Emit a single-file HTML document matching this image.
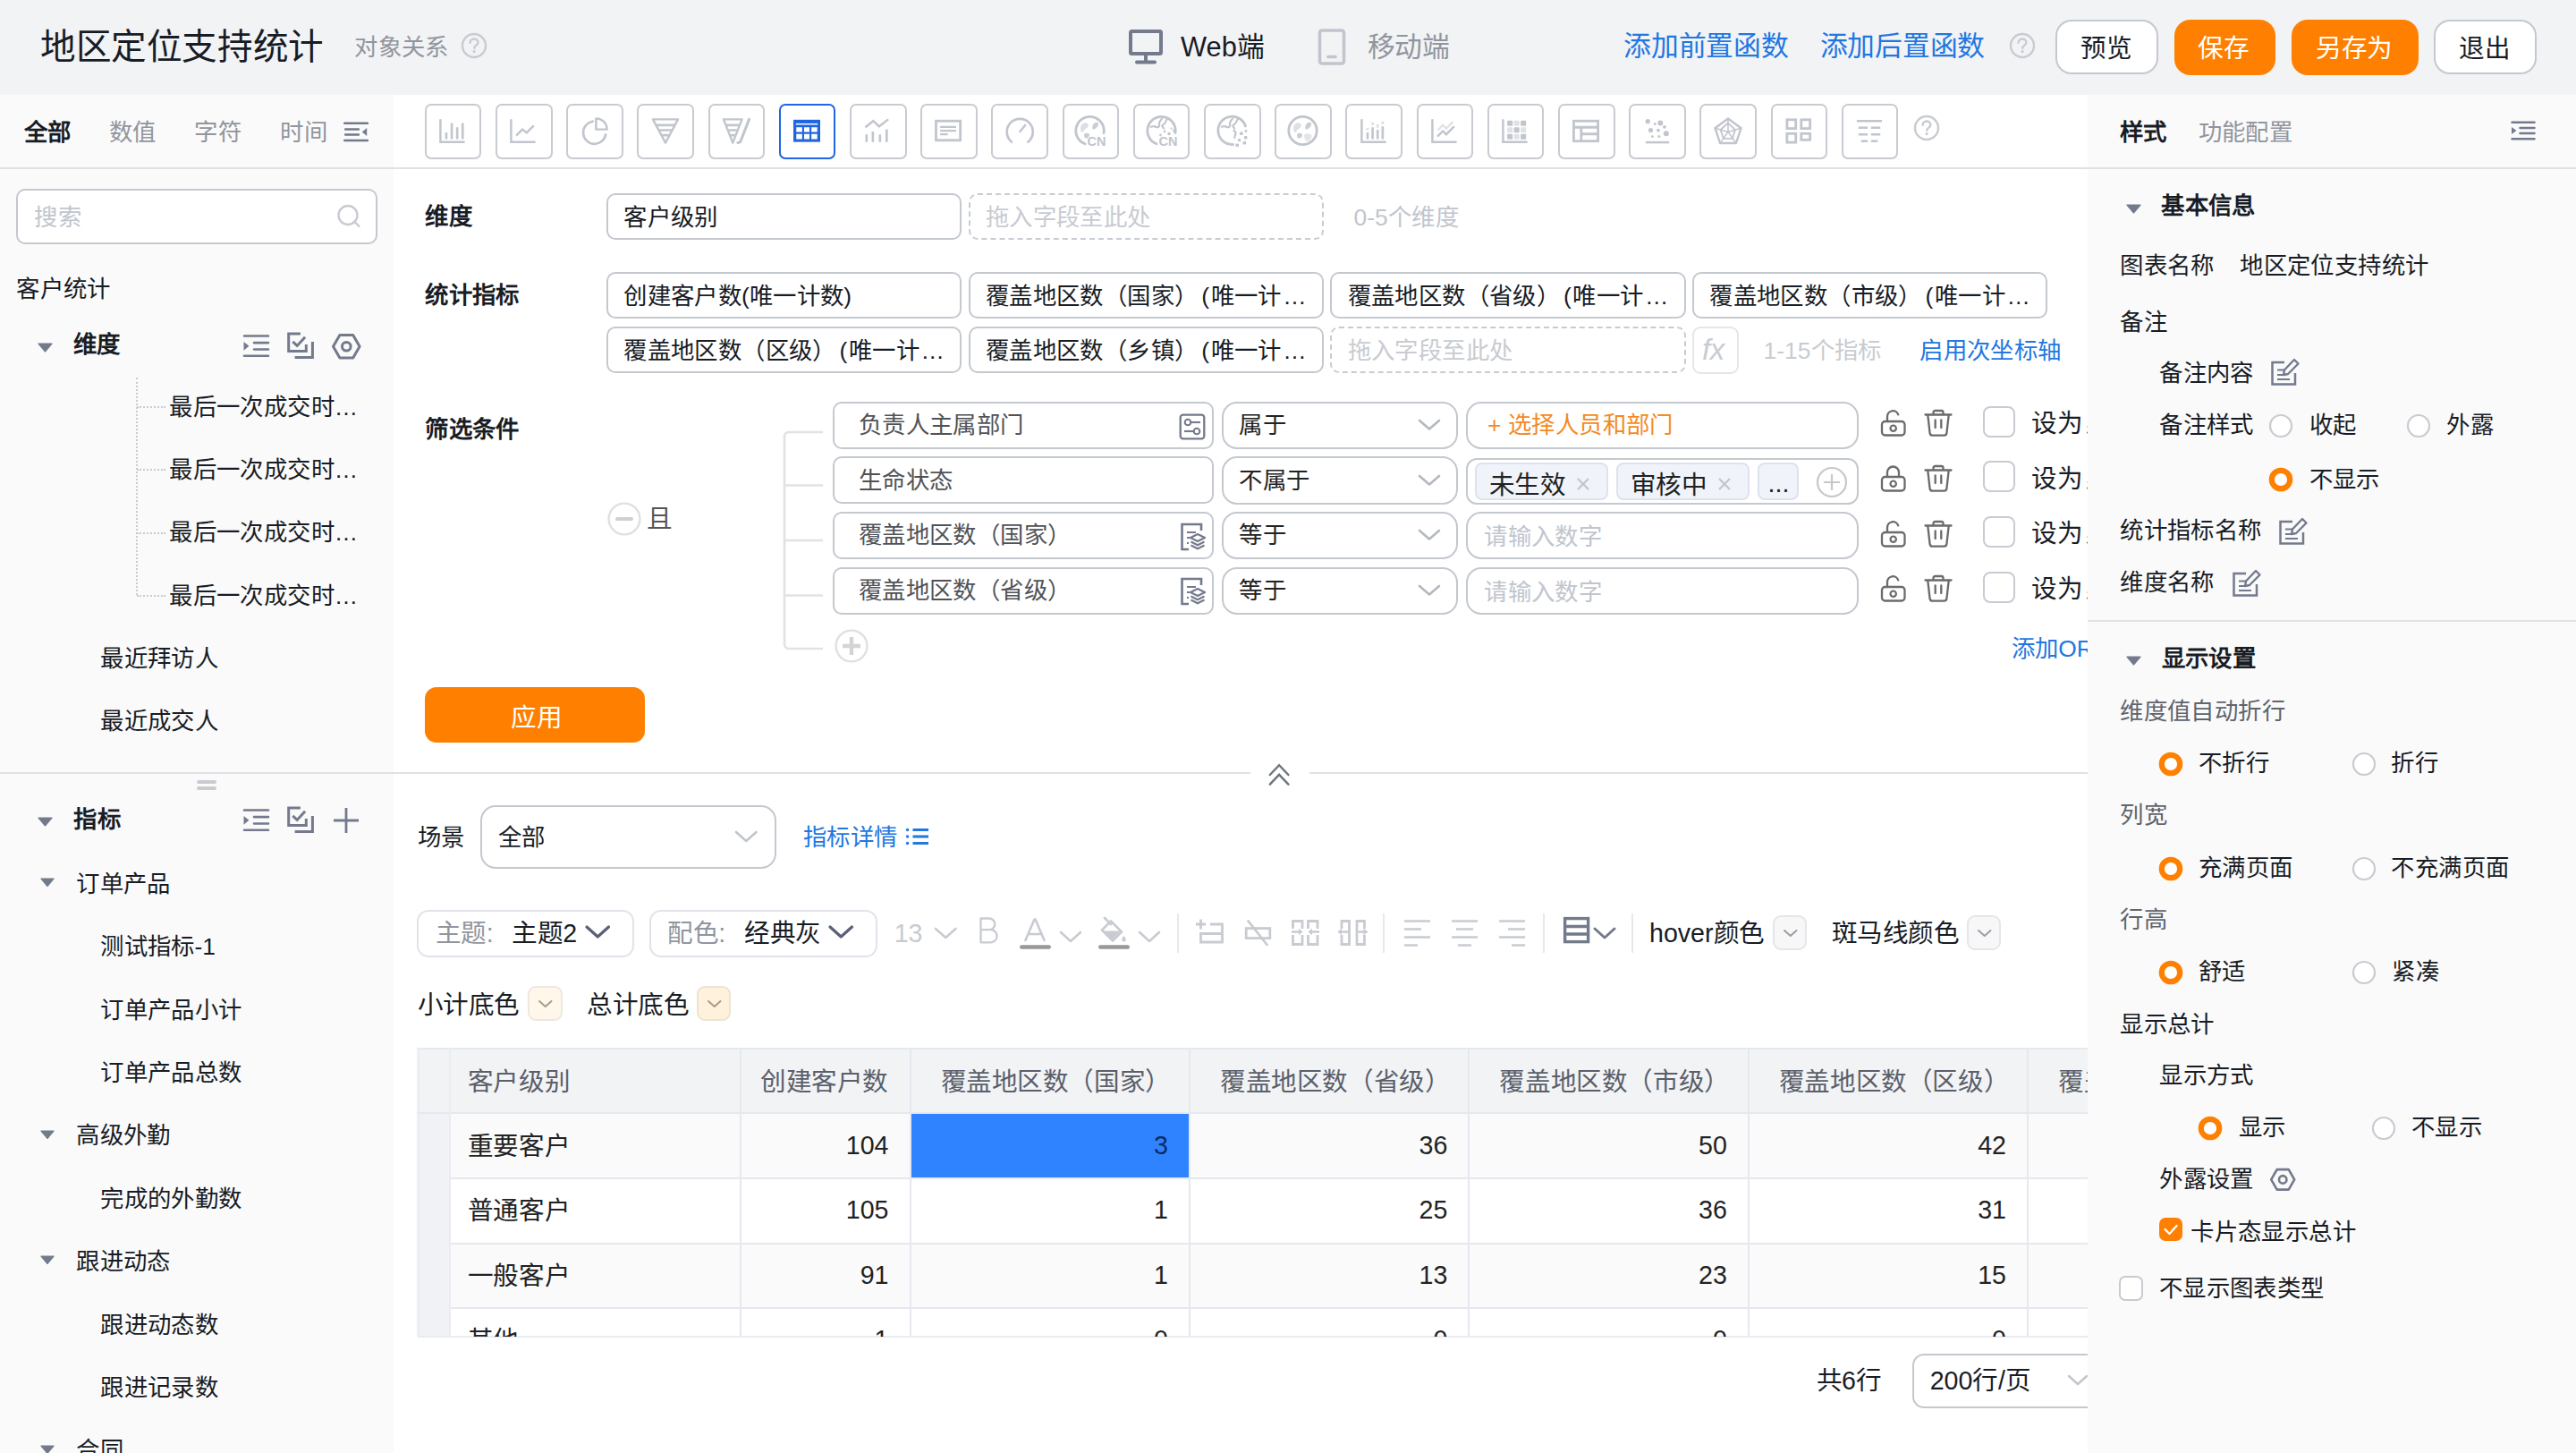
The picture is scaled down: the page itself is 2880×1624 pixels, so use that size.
<!DOCTYPE html>
<html lang="zh-CN"><head><meta charset="utf-8"><title>地区定位支持统计</title>
<style>
html,body{margin:0;padding:0;overflow:hidden;}
body{width:2880px;height:1624px;overflow:hidden;background:#fff;position:relative;font-family:"Liberation Sans",sans-serif;}
.b{position:absolute;box-sizing:content-box;display:block;}
.t{position:absolute;white-space:nowrap;line-height:44px;height:44px;font-family:"Liberation Sans",sans-serif;}
.t i{display:inline-block;width:1em;text-align:center;font-style:normal;}
svg{overflow:visible;}
#root{position:absolute;left:0;top:0;width:2880px;height:1624px;overflow:hidden;background:#fff;}
</style></head><body><div id="root">
<div class="b" style="left:0.0px;top:0.0px;width:2880.0px;height:105.6px;background:#f2f3f5;"></div>
<div class="t" style="left:45.0px;top:30.3px;font-size:39.6px;color:#181c25;"><i>地</i><i>区</i><i>定</i><i>位</i><i>支</i><i>持</i><i>统</i><i>计</i></div>
<div class="t" style="left:396.0px;top:31.3px;font-size:26.4px;color:#91959e;"><i>对</i><i>象</i><i>关</i><i>系</i></div>
<svg class="b" style="left:514.0px;top:35.0px;" width="32" height="32" viewBox="0 0 32 32" fill="none"><circle cx="16" cy="16" r="13" stroke="#c8cbd1" stroke-width="2.4"/><path d="M11.6 12.8c0-2.6 2-4.3 4.4-4.3s4.4 1.6 4.4 4c0 3-4.2 3.2-4.2 6.3" stroke="#c8cbd1" stroke-width="2.4" stroke-linecap="round"/><circle cx="16.1" cy="22.6" r="1.6" fill="#c8cbd1"/></svg>
<svg class="b" style="left:1260.0px;top:31.0px;" width="42" height="42" viewBox="0 0 42 42" fill="none"><rect x="4" y="4" width="34" height="25" rx="1.5" stroke="#737a8c" stroke-width="4"/><path d="M21 29v9M11 38.5h20" stroke="#737a8c" stroke-width="4" stroke-linecap="round"/></svg>
<div class="t" style="left:1320.0px;top:30.8px;font-size:30.8px;color:#181c25;">Web<i>端</i></div>
<svg class="b" style="left:1472.0px;top:31.0px;" width="34" height="42" viewBox="0 0 34 42" fill="none"><rect x="3.5" y="3" width="27" height="37" rx="2.5" stroke="#c1c5cd" stroke-width="3.6"/><path d="M13 32.5h8" stroke="#c1c5cd" stroke-width="3.6" stroke-linecap="round"/></svg>
<div class="t" style="left:1528.5px;top:30.8px;font-size:30.8px;color:#91959e;"><i>移</i><i>动</i><i>端</i></div>
<div class="t" style="left:1815.0px;top:30.4px;font-size:30.8px;color:#2277e0;"><i>添</i><i>加</i><i>前</i><i>置</i><i>函</i><i>数</i></div>
<div class="t" style="left:2034.5px;top:30.4px;font-size:30.8px;color:#2277e0;"><i>添</i><i>加</i><i>后</i><i>置</i><i>函</i><i>数</i></div>
<svg class="b" style="left:2245.0px;top:35.0px;" width="32" height="32" viewBox="0 0 32 32" fill="none"><circle cx="16" cy="16" r="13" stroke="#c8cbd1" stroke-width="2.4"/><path d="M11.6 12.8c0-2.6 2-4.3 4.4-4.3s4.4 1.6 4.4 4c0 3-4.2 3.2-4.2 6.3" stroke="#c8cbd1" stroke-width="2.4" stroke-linecap="round"/><circle cx="16.1" cy="22.6" r="1.6" fill="#c8cbd1"/></svg>
<div class="b" style="left:2298.3px;top:21.8px;width:110.5px;height:57.5px;background:#fff;border:2.2px solid #c4c8cf;border-radius:18px;"></div>
<div class="t" style="left:2298.0px;top:32.1px;font-size:28.6px;color:#181c25;width:113.5px;text-align:center;"><i>预</i><i>览</i></div>
<div class="b" style="left:2430.5px;top:22.0px;width:113.0px;height:62.0px;background:#ff8000;border-radius:18px;"></div>
<div class="t" style="left:2429.5px;top:32.1px;font-size:28.6px;color:#fff;width:113px;text-align:center;"><i>保</i><i>存</i></div>
<div class="b" style="left:2562.0px;top:22.0px;width:142.0px;height:62.0px;background:#ff8000;border-radius:18px;"></div>
<div class="t" style="left:2561.0px;top:32.1px;font-size:28.6px;color:#fff;width:142px;text-align:center;"><i>另</i><i>存</i><i>为</i></div>
<div class="b" style="left:2721.3px;top:21.8px;width:110.5px;height:57.5px;background:#fff;border:2.2px solid #c4c8cf;border-radius:18px;"></div>
<div class="t" style="left:2721.0px;top:32.1px;font-size:28.6px;color:#181c25;width:113.5px;text-align:center;"><i>退</i><i>出</i></div>
<div class="b" style="left:0.0px;top:105.6px;width:440.0px;height:1520.0px;background:#fafafa;"></div>
<div class="b" style="left:0.0px;top:186.6px;width:2880.0px;height:2.2px;background:#dfe1e5;z-index:5;"></div>
<div class="t" style="left:26.5px;top:126.3px;font-size:26.4px;color:#181c25;font-weight:bold;"><i>全</i><i>部</i></div>
<div class="t" style="left:121.5px;top:126.3px;font-size:26.4px;color:#91959e;"><i>数</i><i>值</i></div>
<div class="t" style="left:217.0px;top:126.3px;font-size:26.4px;color:#91959e;"><i>字</i><i>符</i></div>
<div class="t" style="left:313.0px;top:126.3px;font-size:26.4px;color:#91959e;"><i>时</i><i>间</i></div>
<svg class="b" style="left:384.0px;top:134.0px;" width="28" height="26" viewBox="0 0 28 26" fill="none"><path d="M1.200 3.800h25.700M2.100 10.400h14.800M2.100 16.500h14.800M1.200 23.100h25.700" stroke="#737a8c" stroke-width="2.500" stroke-linecap="round"/><path d="M20.800 13.500l5.400-4.500v9z" fill="#737a8c"/></svg>
<div class="b" style="left:18.3px;top:210.8px;width:399.6px;height:58.6px;background:#fff;border:2.2px solid #c4c8cf;border-radius:10px;"></div>
<div class="t" style="left:38.0px;top:220.8px;font-size:26.4px;color:#c1c5cd;"><i>搜</i><i>索</i></div>
<svg class="b" style="left:374.0px;top:226.0px;" width="32" height="32" viewBox="0 0 32 32" fill="none"><circle cx="15" cy="14.5" r="10.5" stroke="#c8cbd1" stroke-width="2.4"/><path d="M23 22.5l4.5 4.5" stroke="#c8cbd1" stroke-width="2.4" stroke-linecap="round"/></svg>
<div class="t" style="left:18.0px;top:301.3px;font-size:26.4px;color:#181c25;"><i>客</i><i>户</i><i>统</i><i>计</i></div>
<svg class="b" style="left:42.0px;top:382.5px;" width="17" height="10.5" viewBox="0 0 17 10.5" fill="none"><path d="M1 0.5h15a.6.6 0 0 1 .5 1L9.3 9.9a1 1 0 0 1-1.6 0L.5 1.5a.6.6 0 0 1 .5-1z" fill="#737a8c"/></svg>
<div class="t" style="left:81.5px;top:363.3px;font-size:26.4px;color:#181c25;font-weight:bold;"><i>维</i><i>度</i></div>
<svg class="b" style="left:271.5px;top:374.0px;" width="30" height="26" viewBox="0 0 30 26" fill="none"><path d="M1 1.500h27M12 9.100h16M12 16.500h16M1 23.800h27" stroke="#737a8c" stroke-width="2.600" stroke-linecap="round"/><path d="M0.500 8l5.900 4.800-5.900 4.900z" fill="#737a8c"/></svg>
<svg class="b" style="left:320.0px;top:371.0px;" width="32" height="32" viewBox="0 0 32 32" fill="none"><path d="M15.900 1.900H2.700v19.500h19.600v-7.300" stroke="#737a8c" stroke-width="3"/><path d="M7.300 10.800l4.900 4.600 8.900-9.600" stroke="#737a8c" stroke-width="3"/><path d="M29.400 11.100v17.500H9.600" stroke="#737a8c" stroke-width="3"/></svg>
<svg class="b" style="left:370.0px;top:371.5px;" width="34.0" height="31.0" viewBox="0 0 34 31" fill="none"><path d="M9.900 2.400h14.800l7.400 12.800-7.400 12.800H9.900L2.500 15.200z" stroke="#737a8c" stroke-width="3.0" stroke-linejoin="round"/><circle cx="17.300" cy="15.200" r="4.800" stroke="#737a8c" stroke-width="3.0"/></svg>
<div class="b" style="left:152.0px;top:422.0px;width:0.0px;height:243.0px;border-left:2px dotted #c8cbd1;"></div>
<div class="b" style="left:153.0px;top:453.7px;width:32.0px;height:0.0px;border-top:2px dotted #c8cbd1;"></div>
<div class="t" style="left:189.0px;top:432.5px;font-size:26.4px;color:#181c25;"><i>最</i><i>后</i><i>一</i><i>次</i><i>成</i><i>交</i><i>时</i>…</div>
<div class="b" style="left:153.0px;top:524.1px;width:32.0px;height:0.0px;border-top:2px dotted #c8cbd1;"></div>
<div class="t" style="left:189.0px;top:502.9px;font-size:26.4px;color:#181c25;"><i>最</i><i>后</i><i>一</i><i>次</i><i>成</i><i>交</i><i>时</i>…</div>
<div class="b" style="left:153.0px;top:594.5px;width:32.0px;height:0.0px;border-top:2px dotted #c8cbd1;"></div>
<div class="t" style="left:189.0px;top:573.3px;font-size:26.4px;color:#181c25;"><i>最</i><i>后</i><i>一</i><i>次</i><i>成</i><i>交</i><i>时</i>…</div>
<div class="b" style="left:153.0px;top:664.9px;width:32.0px;height:0.0px;border-top:2px dotted #c8cbd1;"></div>
<div class="t" style="left:189.0px;top:643.7px;font-size:26.4px;color:#181c25;"><i>最</i><i>后</i><i>一</i><i>次</i><i>成</i><i>交</i><i>时</i>…</div>
<div class="t" style="left:112.0px;top:713.8px;font-size:26.4px;color:#181c25;"><i>最</i><i>近</i><i>拜</i><i>访</i><i>人</i></div>
<div class="t" style="left:112.0px;top:784.1px;font-size:26.4px;color:#181c25;"><i>最</i><i>近</i><i>成</i><i>交</i><i>人</i></div>
<div class="b" style="left:0.0px;top:862.8px;width:2334.4px;height:2.2px;background:#dfe1e5;"></div>
<div class="b" style="left:220.0px;top:872.0px;width:22.0px;height:4.0px;background:#c8cbd1;border-radius:2px;"></div>
<div class="b" style="left:220.0px;top:878.7px;width:22.0px;height:4.0px;background:#c8cbd1;border-radius:2px;"></div>
<svg class="b" style="left:42.0px;top:912.5px;" width="17" height="10.5" viewBox="0 0 17 10.5" fill="none"><path d="M1 0.5h15a.6.6 0 0 1 .5 1L9.3 9.9a1 1 0 0 1-1.6 0L.5 1.5a.6.6 0 0 1 .5-1z" fill="#737a8c"/></svg>
<div class="t" style="left:82.0px;top:894.3px;font-size:26.4px;color:#181c25;font-weight:bold;"><i>指</i><i>标</i></div>
<svg class="b" style="left:271.5px;top:904.0px;" width="30" height="26" viewBox="0 0 30 26" fill="none"><path d="M1 1.500h27M12 9.100h16M12 16.500h16M1 23.800h27" stroke="#737a8c" stroke-width="2.600" stroke-linecap="round"/><path d="M0.500 8l5.900 4.800-5.900 4.900z" fill="#737a8c"/></svg>
<svg class="b" style="left:320.0px;top:900.5px;" width="32" height="32" viewBox="0 0 32 32" fill="none"><path d="M15.900 1.900H2.700v19.500h19.600v-7.300" stroke="#737a8c" stroke-width="3"/><path d="M7.300 10.800l4.900 4.600 8.900-9.600" stroke="#737a8c" stroke-width="3"/><path d="M29.400 11.100v17.500H9.600" stroke="#737a8c" stroke-width="3"/></svg>
<svg class="b" style="left:372.0px;top:902.0px;" width="30" height="30" viewBox="0 0 30 30" fill="none"><path d="M15 1v28M1 15h28" stroke="#737a8c" stroke-width="2.8"/></svg>
<svg class="b" style="left:44.5px;top:981.0px;" width="16" height="10" viewBox="0 0 16 10" fill="none"><path d="M1 0.5h14a.6.6 0 0 1 .5 1L8.8 9.4a1 1 0 0 1-1.6 0L.5 1.5a.6.6 0 0 1 .5-1z" fill="#737a8c"/></svg>
<div class="t" style="left:85.0px;top:965.8px;font-size:26.4px;color:#181c25;"><i>订</i><i>单</i><i>产</i><i>品</i></div>
<div class="t" style="left:112.0px;top:1036.2px;font-size:26.4px;color:#181c25;"><i>测</i><i>试</i><i>指</i><i>标</i>-1</div>
<div class="t" style="left:112.0px;top:1106.6px;font-size:26.4px;color:#181c25;"><i>订</i><i>单</i><i>产</i><i>品</i><i>小</i><i>计</i></div>
<div class="t" style="left:112.0px;top:1177.0px;font-size:26.4px;color:#181c25;"><i>订</i><i>单</i><i>产</i><i>品</i><i>总</i><i>数</i></div>
<svg class="b" style="left:44.5px;top:1262.6px;" width="16" height="10" viewBox="0 0 16 10" fill="none"><path d="M1 0.5h14a.6.6 0 0 1 .5 1L8.8 9.4a1 1 0 0 1-1.6 0L.5 1.5a.6.6 0 0 1 .5-1z" fill="#737a8c"/></svg>
<div class="t" style="left:85.0px;top:1247.4px;font-size:26.4px;color:#181c25;"><i>高</i><i>级</i><i>外</i><i>勤</i></div>
<div class="t" style="left:112.0px;top:1317.8px;font-size:26.4px;color:#181c25;"><i>完</i><i>成</i><i>的</i><i>外</i><i>勤</i><i>数</i></div>
<svg class="b" style="left:44.5px;top:1403.4px;" width="16" height="10" viewBox="0 0 16 10" fill="none"><path d="M1 0.5h14a.6.6 0 0 1 .5 1L8.8 9.4a1 1 0 0 1-1.6 0L.5 1.5a.6.6 0 0 1 .5-1z" fill="#737a8c"/></svg>
<div class="t" style="left:85.0px;top:1388.2px;font-size:26.4px;color:#181c25;"><i>跟</i><i>进</i><i>动</i><i>态</i></div>
<div class="t" style="left:112.0px;top:1458.6px;font-size:26.4px;color:#181c25;"><i>跟</i><i>进</i><i>动</i><i>态</i><i>数</i></div>
<div class="t" style="left:112.0px;top:1529.0px;font-size:26.4px;color:#181c25;"><i>跟</i><i>进</i><i>记</i><i>录</i><i>数</i></div>
<svg class="b" style="left:44.5px;top:1614.6px;" width="16" height="10" viewBox="0 0 16 10" fill="none"><path d="M1 0.5h14a.6.6 0 0 1 .5 1L8.8 9.4a1 1 0 0 1-1.6 0L.5 1.5a.6.6 0 0 1 .5-1z" fill="#737a8c"/></svg>
<div class="t" style="left:85.0px;top:1599.4px;font-size:26.4px;color:#181c25;"><i>合</i><i>同</i></div>
<div class="b" style="left:474.8px;top:116.1px;width:59.7px;height:58.2px;background:#fff;border:2.2px solid #c8cbd1;border-radius:7px;"></div>
<svg class="b" style="left:491.2px;top:131.4px;" width="30" height="30" viewBox="0 0 32 32" fill="none"><path d="M1.500 2.500v27h29" stroke="#c1c5cd" stroke-width="2.600"/><path d="M8.500 26V18M15 26V7M21.500 26V12M28 26V7" stroke="#c1c5cd" stroke-width="2.800"/></svg>
<div class="b" style="left:554.0px;top:116.1px;width:59.7px;height:58.2px;background:#fff;border:2.2px solid #c8cbd1;border-radius:7px;"></div>
<svg class="b" style="left:570.4px;top:131.4px;" width="30" height="30" viewBox="0 0 32 32" fill="none"><path d="M1.500 2.500v27h29" stroke="#c1c5cd" stroke-width="2.600"/><path d="M7.500 22l7.500-7.500 5 4 8.500-8.500" stroke="#c1c5cd" stroke-width="2.600"/></svg>
<div class="b" style="left:633.2px;top:116.1px;width:59.7px;height:58.2px;background:#fff;border:2.2px solid #c8cbd1;border-radius:7px;"></div>
<svg class="b" style="left:649.6px;top:131.4px;" width="30" height="30" viewBox="0 0 32 32" fill="none"><path d="M13.500 5A13.500 13.500 0 1 0 29 20.500" stroke="#c1c5cd" stroke-width="2.800" stroke-linecap="round"/><path d="M17.500 1.500a13 13 0 0 1 13 13h-13z" stroke="#c1c5cd" stroke-width="2.600" stroke-linejoin="round"/></svg>
<div class="b" style="left:712.4px;top:116.1px;width:59.7px;height:58.2px;background:#fff;border:2.2px solid #c8cbd1;border-radius:7px;"></div>
<svg class="b" style="left:728.8px;top:131.4px;" width="30" height="30" viewBox="0 0 32 32" fill="none"><path d="M1 2.500h30L16 30.500z" stroke="#c1c5cd" stroke-width="2.600" stroke-linejoin="round"/><path d="M5 9.500h22M8.500 15.500h15M11.500 21.500h9" stroke="#c1c5cd" stroke-width="2.800"/></svg>
<div class="b" style="left:791.6px;top:116.1px;width:59.7px;height:58.2px;background:#fff;border:2.2px solid #c8cbd1;border-radius:7px;"></div>
<svg class="b" style="left:808.0px;top:131.4px;" width="30" height="30" viewBox="0 0 32 32" fill="none"><path d="M1 2.500h22L12 30.500z" stroke="#c1c5cd" stroke-width="2.600" stroke-linejoin="round"/><path d="M4 9.500h16M7 15.500h10M9.500 21.500h5" stroke="#c1c5cd" stroke-width="2.800"/><path d="M31.500 2.500L21 29.500l-3 1" stroke="#c1c5cd" stroke-width="3.200" stroke-linecap="round" stroke-linejoin="round"/></svg>
<div class="b" style="left:870.8px;top:116.1px;width:59.7px;height:58.2px;background:#fff;border:2.2px solid #1f66e0;border-radius:7px;"></div>
<svg class="b" style="left:887.2px;top:131.4px;" width="30" height="30" viewBox="0 0 32 32" fill="none"><path d="M0 3h32v26.500H0z" fill="#1f66e0"/><path d="M3.500 12h7v5.500h-7zM12.800 12h6.400v5.500h-6.400zM21.500 12h7v5.500h-7zM3.500 20h7v6h-7zM12.800 20h6.400v6h-6.400zM21.500 20h7v6h-7z" fill="#fff"/><path d="M3 8.200h26" stroke="#fff" stroke-width="1.600"/></svg>
<div class="b" style="left:950.0px;top:116.1px;width:59.7px;height:58.2px;background:#fff;border:2.2px solid #c8cbd1;border-radius:7px;"></div>
<svg class="b" style="left:966.4px;top:131.4px;" width="30" height="30" viewBox="0 0 32 32" fill="none"><path d="M3 29.500V20.500M10.500 29.500V17M19 29.500V20.500M27 29.500V14.500" stroke="#c1c5cd" stroke-width="2.800"/><path d="M1.500 12l9.500-7.500 7 6.500 11-8.500" stroke="#c1c5cd" stroke-width="2.600"/></svg>
<div class="b" style="left:1029.2px;top:116.1px;width:59.7px;height:58.2px;background:#fff;border:2.2px solid #c8cbd1;border-radius:7px;"></div>
<svg class="b" style="left:1045.6px;top:131.4px;" width="30" height="30" viewBox="0 0 32 32" fill="none"><rect x="0.500" y="4.500" width="29" height="23" stroke="#c1c5cd" stroke-width="3"/><path d="M5.500 11.500h19M5.500 16h19M5.500 20.500h9" stroke="#c1c5cd" stroke-width="2.400"/></svg>
<div class="b" style="left:1108.4px;top:116.1px;width:59.7px;height:58.2px;background:#fff;border:2.2px solid #c8cbd1;border-radius:7px;"></div>
<svg class="b" style="left:1124.8px;top:131.4px;" width="30" height="30" viewBox="0 0 32 32" fill="none"><path d="M6.500 29.500A15.500 15.500 0 1 1 26 29.500" stroke="#c1c5cd" stroke-width="2.800" stroke-linecap="round"/><path d="M16.500 17l6-7.500" stroke="#c1c5cd" stroke-width="2.600" stroke-linecap="round"/></svg>
<div class="b" style="left:1187.6px;top:116.1px;width:59.7px;height:58.2px;background:#fff;border:2.2px solid #c8cbd1;border-radius:7px;"></div>
<svg class="b" style="left:1203.3px;top:130.3px;" width="32" height="32" viewBox="0 0 32 32" fill="none"><path d="M10.1 30.8A15.7 15.7 0 1 1 31 18.7" stroke="#c1c5cd" stroke-width="2.8" stroke-linecap="round"/><path d="M6.500 9c2.500-2.500 6-2.500 7 0s-1.500 4.500-3.500 5.500-1 4-3 3.500-3-5.500-.5-9z" fill="#c1c5cd" opacity=".55"/><path d="M19 9.500c1.500-3 5-3.500 6-1.500s-2.500 6-5 6.500-2-3-1-5z" fill="#c1c5cd" opacity=".85"/><path d="M9.500 19.500c2-1.500 5.500-.5 5.500 1.500s-2 4-4 3.500-2.500-3.500-1.500-5z" fill="#c1c5cd" opacity=".85"/><text x="12.6" y="33.4" font-family="Liberation Sans" font-weight="bold" font-size="14.5" fill="#c1c5cd">CN</text></svg>
<div class="b" style="left:1266.8px;top:116.1px;width:59.7px;height:58.2px;background:#fff;border:2.2px solid #c8cbd1;border-radius:7px;"></div>
<svg class="b" style="left:1282.5px;top:130.3px;" width="32" height="32" viewBox="0 0 32 32" fill="none"><path d="M10.1 30.8A15.7 15.7 0 1 1 31 18.7" stroke="#c1c5cd" stroke-width="2.8" stroke-linecap="round"/><path d="M16.500 1.500c-1 3-4.500 4.500-3.500 7.500s-2.500 4-4.500 2.500-3 1-5.500 0M22.500 2.500c-3 2.500-1.500 5-4.500 6.500s-1 4 1 5" stroke="#c1c5cd" stroke-width="2.200" fill="none"/><circle cx="19" cy="17" r="1.400" fill="#c1c5cd"/><circle cx="24" cy="19.500" r="1.800" fill="#c1c5cd"/><circle cx="14.500" cy="21" r="1.400" fill="#c1c5cd"/><circle cx="29.500" cy="16" r="1.500" fill="#c1c5cd"/><circle cx="26.500" cy="13.500" r="1.100" fill="#c1c5cd"/><text x="12.6" y="33.4" font-family="Liberation Sans" font-weight="bold" font-size="14.5" fill="#c1c5cd">CN</text></svg>
<div class="b" style="left:1346.0px;top:116.1px;width:59.7px;height:58.2px;background:#fff;border:2.2px solid #c8cbd1;border-radius:7px;"></div>
<svg class="b" style="left:1361.7px;top:130.3px;" width="32" height="32" viewBox="0 0 32 32" fill="none"><path d="M16.500 31.500A15.700 15.700 0 1 1 30.500 11" stroke="#c1c5cd" stroke-width="2.800" stroke-linecap="round"/><path d="M16.500 1.500c-1 3-4.500 4.500-3.500 7.500s-2.500 4-4.500 2.500-3 1-5.500 0M22.500 2.500c-3 2.500-1.500 5-4.500 6.500s-1 4 1 5" stroke="#c1c5cd" stroke-width="2.200" fill="none"/><path d="M17 15c1 2 3 2 2.500 4.500s-2 3-1 5.500" stroke="#c1c5cd" stroke-width="2.200"/><rect x="24" y="17.500" width="3.600" height="3.600" rx="1" fill="#c1c5cd"/><rect x="29" y="22" width="3.400" height="3.400" rx="1" fill="#c1c5cd"/><rect x="22" y="25" width="3.200" height="3.200" rx="1" fill="#c1c5cd"/><rect x="27.500" y="28" width="3.600" height="3.600" rx="1" fill="#c1c5cd"/><rect x="19.500" y="30.500" width="3.600" height="3.600" rx="1" fill="#c1c5cd"/><circle cx="31" cy="16.500" r="1.400" fill="#c1c5cd"/></svg>
<div class="b" style="left:1425.2px;top:116.1px;width:59.7px;height:58.2px;background:#fff;border:2.2px solid #c8cbd1;border-radius:7px;"></div>
<svg class="b" style="left:1440.9px;top:130.3px;" width="32" height="32" viewBox="0 0 32 32" fill="none"><circle cx="15.500" cy="16" r="15.700" stroke="#c1c5cd" stroke-width="2.800"/><path d="M6.500 9c2.500-2.500 6-2.500 7 0s-1.500 4.500-3.500 5.500-1 4-3 3.500-3-5.500-.5-9z" fill="#c1c5cd" opacity=".55"/><path d="M19 9.500c1.500-3 5-3.500 6-1.500s-2.500 6-5 6.500-2-3-1-5z" fill="#c1c5cd" opacity=".85"/><path d="M9.500 19.500c2-1.500 5.500-.5 5.500 1.500s-2 4-4 3.500-2.500-3.500-1.500-5z" fill="#c1c5cd" opacity=".85"/><path d="M17.500 20c2.500-1.500 6-1 7.500 1s-1 6-4 7-4.500-6-3.500-8z" fill="#c1c5cd" opacity=".45"/></svg>
<div class="b" style="left:1504.4px;top:116.1px;width:59.7px;height:58.2px;background:#fff;border:2.2px solid #c8cbd1;border-radius:7px;"></div>
<svg class="b" style="left:1520.8px;top:131.4px;" width="30" height="30" viewBox="0 0 32 32" fill="none"><path d="M1.500 2.500v27h29" stroke="#c1c5cd" stroke-width="2.600"/><path d="M8.500 26V18M14.500 26V12M20.500 26V15M26.500 26V11" stroke="#c1c5cd" stroke-width="2.800"/><path d="M8.500 15.500V12.500M14.500 9.500V6M20.500 12.500V8.500M26.500 8.500V5" stroke="#c1c5cd" stroke-width="2.800" opacity=".55"/></svg>
<div class="b" style="left:1583.6px;top:116.1px;width:59.7px;height:58.2px;background:#fff;border:2.2px solid #c8cbd1;border-radius:7px;"></div>
<svg class="b" style="left:1600.0px;top:131.4px;" width="30" height="30" viewBox="0 0 32 32" fill="none"><path d="M1.500 2.500v27h29" stroke="#c1c5cd" stroke-width="2.600"/><path d="M7.500 23l6.500-6.500 4 4 9.500-9.500" stroke="#c1c5cd" stroke-width="2.600"/><path d="M8 15.500l6-6 4 4 8-8" stroke="#c1c5cd" stroke-width="2.400" opacity=".5"/></svg>
<div class="b" style="left:1662.8px;top:116.1px;width:59.7px;height:58.2px;background:#fff;border:2.2px solid #c8cbd1;border-radius:7px;"></div>
<svg class="b" style="left:1679.2px;top:131.4px;" width="30" height="30" viewBox="0 0 32 32" fill="none"><path d="M1.500 2.500v27h29" stroke="#c1c5cd" stroke-width="2.600"/><g fill="#c1c5cd"><rect x="6.500" y="4" width="6.500" height="6.500" rx="1.200"/><rect x="14.500" y="4" width="6.500" height="6.500" rx="1.200" opacity=".5"/><rect x="22.500" y="4" width="6.500" height="6.500" rx="1.200"/><rect x="6.500" y="12" width="6.500" height="6.500" rx="1.200" opacity=".5"/><rect x="14.500" y="12" width="6.500" height="6.500" rx="1.200"/><rect x="22.500" y="12" width="6.500" height="6.500" rx="1.200" opacity=".5"/><rect x="6.500" y="20" width="6.500" height="6.500" rx="1.200"/><rect x="14.500" y="20" width="6.500" height="6.500" rx="1.200" opacity=".5"/><rect x="22.500" y="20" width="6.500" height="6.500" rx="1.200"/></g></svg>
<div class="b" style="left:1742.0px;top:116.1px;width:59.7px;height:58.2px;background:#fff;border:2.2px solid #c8cbd1;border-radius:7px;"></div>
<svg class="b" style="left:1758.4px;top:131.4px;" width="30" height="30" viewBox="0 0 32 32" fill="none"><rect x="1.500" y="4.500" width="29" height="24" stroke="#c1c5cd" stroke-width="3"/><path d="M1.500 12h29M10.500 12v16.500M10.500 20h20" stroke="#c1c5cd" stroke-width="3"/></svg>
<div class="b" style="left:1821.2px;top:116.1px;width:59.7px;height:58.2px;background:#fff;border:2.2px solid #c8cbd1;border-radius:7px;"></div>
<svg class="b" style="left:1837.6px;top:131.4px;" width="30" height="30" viewBox="0 0 32 32" fill="none"><path d="M2 30h28" stroke="#c1c5cd" stroke-width="2.600"/><circle cx="4.500" cy="5" r="2.800" fill="#c1c5cd"/><circle cx="19.500" cy="7" r="3.200" fill="#c1c5cd"/><circle cx="8" cy="15.500" r="2.800" fill="#c1c5cd"/><circle cx="26.500" cy="19.500" r="3.200" fill="#c1c5cd"/><circle cx="24.500" cy="11.500" r="2" fill="#c1c5cd"/><circle cx="13" cy="8" r="1.600" fill="#c1c5cd"/><circle cx="17" cy="15.500" r="2" fill="#c1c5cd"/><circle cx="18" cy="23" r="1.600" fill="#c1c5cd"/><circle cx="10" cy="23" r="1.500" fill="#c1c5cd"/></svg>
<div class="b" style="left:1900.4px;top:116.1px;width:59.7px;height:58.2px;background:#fff;border:2.2px solid #c8cbd1;border-radius:7px;"></div>
<svg class="b" style="left:1916.8px;top:131.4px;" width="30" height="30" viewBox="0 0 32 32" fill="none"><path d="M16 1.500l15.500 11.500-6 18H6.500l-6-18z" stroke="#c1c5cd" stroke-width="2.600" stroke-linejoin="round"/><path d="M16 7l8.500 8-3.500 10.500H10.500L7 15z" stroke="#c1c5cd" stroke-width="2" stroke-linejoin="round"/><path d="M16 1.500v16M.5 13l15.500 4.500 15.500-4.500M6.500 31l9.500-13.500 9.500 13.500" stroke="#c1c5cd" stroke-width="1.600"/></svg>
<div class="b" style="left:1979.6px;top:116.1px;width:59.7px;height:58.2px;background:#fff;border:2.2px solid #c8cbd1;border-radius:7px;"></div>
<svg class="b" style="left:1996.0px;top:131.4px;" width="30" height="30" viewBox="0 0 32 32" fill="none"><rect x="2" y="3" width="10.500" height="10.500" stroke="#c1c5cd" stroke-width="3"/><rect x="19" y="3" width="10.500" height="10.500" stroke="#c1c5cd" stroke-width="3"/><rect x="2" y="19.500" width="10.500" height="10.500" stroke="#c1c5cd" stroke-width="3"/><rect x="19" y="19.500" width="10.500" height="7.500" stroke="#c1c5cd" stroke-width="3"/></svg>
<div class="b" style="left:2058.8px;top:116.1px;width:59.7px;height:58.2px;background:#fff;border:2.2px solid #c8cbd1;border-radius:7px;"></div>
<svg class="b" style="left:2075.2px;top:131.4px;" width="30" height="30" viewBox="0 0 32 32" fill="none"><path d="M1 4.500h30M3 12.500h11M18 12.500h11M3 20.500h11M18 20.500h11M6 28.500h8M18 28.500h8" stroke="#c1c5cd" stroke-width="2.600"/></svg>
<svg class="b" style="left:2137.7px;top:127.0px;" width="32" height="32" viewBox="0 0 32 32" fill="none"><circle cx="16" cy="16" r="13" stroke="#c8cbd1" stroke-width="2.4"/><path d="M11.6 12.8c0-2.6 2-4.3 4.4-4.3s4.4 1.6 4.4 4c0 3-4.2 3.2-4.2 6.3" stroke="#c8cbd1" stroke-width="2.4" stroke-linecap="round"/><circle cx="16.1" cy="22.6" r="1.6" fill="#c8cbd1"/></svg>
<div class="t" style="left:475.0px;top:219.8px;font-size:26.4px;color:#181c25;font-weight:bold;"><i>维</i><i>度</i></div>
<div class="t" style="left:475.0px;top:307.8px;font-size:26.4px;color:#181c25;font-weight:bold;"><i>统</i><i>计</i><i>指</i><i>标</i></div>
<div class="t" style="left:475.0px;top:457.5px;font-size:26.4px;color:#181c25;font-weight:bold;"><i>筛</i><i>选</i><i>条</i><i>件</i></div>
<div class="b" style="left:677.8px;top:216.1px;width:393.4px;height:48.0px;background:#fff;border:2.2px solid #c4c8cf;border-radius:10px;"></div>
<div class="t" style="left:697.0px;top:220.8px;font-size:26.4px;color:#181c25;"><i>客</i><i>户</i><i>级</i><i>别</i></div>
<div class="b" style="left:1082.5px;top:216.1px;width:393.4px;height:48.0px;background:#fff;border:2.2px solid #c8cbd1;border-radius:10px;border-style:dashed;"></div>
<div class="t" style="left:1101.7px;top:220.8px;font-size:26.4px;color:#c8cbd1;"><i>拖</i><i>入</i><i>字</i><i>段</i><i>至</i><i>此</i><i>处</i></div>
<div class="t" style="left:1513.5px;top:220.8px;font-size:26.4px;color:#c1c5cd;">0-5<i>个</i><i>维</i><i>度</i></div>
<div class="b" style="left:677.8px;top:304.1px;width:393.4px;height:48.0px;background:#fff;border:2.2px solid #c4c8cf;border-radius:10px;"></div>
<div class="t" style="left:697.0px;top:308.8px;font-size:26.4px;color:#181c25;"><i>创</i><i>建</i><i>客</i><i>户</i><i>数</i>(<i>唯</i><i>一</i><i>计</i><i>数</i>)</div>
<div class="b" style="left:1082.5px;top:304.1px;width:393.4px;height:48.0px;background:#fff;border:2.2px solid #c4c8cf;border-radius:10px;"></div>
<div class="t" style="left:1101.7px;top:308.8px;font-size:26.4px;color:#181c25;"><i>覆</i><i>盖</i><i>地</i><i>区</i><i>数</i><i>（</i><i>国</i><i>家</i><i>）</i><span style="margin:0 1.5px 0 4px">(</span><i>唯</i><i>一</i><i>计</i><span style="margin-left:1.5px">…</span></div>
<div class="b" style="left:1487.2px;top:304.1px;width:393.4px;height:48.0px;background:#fff;border:2.2px solid #c4c8cf;border-radius:10px;"></div>
<div class="t" style="left:1506.4px;top:308.8px;font-size:26.4px;color:#181c25;"><i>覆</i><i>盖</i><i>地</i><i>区</i><i>数</i><i>（</i><i>省</i><i>级</i><i>）</i><span style="margin:0 1.5px 0 4px">(</span><i>唯</i><i>一</i><i>计</i><span style="margin-left:1.5px">…</span></div>
<div class="b" style="left:1891.9px;top:304.1px;width:393.4px;height:48.0px;background:#fff;border:2.2px solid #c4c8cf;border-radius:10px;"></div>
<div class="t" style="left:1911.1px;top:308.8px;font-size:26.4px;color:#181c25;"><i>覆</i><i>盖</i><i>地</i><i>区</i><i>数</i><i>（</i><i>市</i><i>级</i><i>）</i><span style="margin:0 1.5px 0 4px">(</span><i>唯</i><i>一</i><i>计</i><span style="margin-left:1.5px">…</span></div>
<div class="b" style="left:677.8px;top:365.1px;width:393.4px;height:48.0px;background:#fff;border:2.2px solid #c4c8cf;border-radius:10px;"></div>
<div class="t" style="left:697.0px;top:369.8px;font-size:26.4px;color:#181c25;"><i>覆</i><i>盖</i><i>地</i><i>区</i><i>数</i><i>（</i><i>区</i><i>级</i><i>）</i><span style="margin:0 1.5px 0 4px">(</span><i>唯</i><i>一</i><i>计</i><span style="margin-left:1.5px">…</span></div>
<div class="b" style="left:1082.5px;top:365.1px;width:393.4px;height:48.0px;background:#fff;border:2.2px solid #c4c8cf;border-radius:10px;"></div>
<div class="t" style="left:1101.7px;top:369.8px;font-size:26.4px;color:#181c25;"><i>覆</i><i>盖</i><i>地</i><i>区</i><i>数</i><i>（</i><i>乡</i><i>镇</i><i>）</i><span style="margin:0 1.5px 0 4px">(</span><i>唯</i><i>一</i><i>计</i><span style="margin-left:1.5px">…</span></div>
<div class="b" style="left:1487.2px;top:365.1px;width:393.4px;height:48.0px;background:#fff;border:2.2px solid #c8cbd1;border-radius:10px;border-style:dashed;"></div>
<div class="t" style="left:1506.4px;top:369.8px;font-size:26.4px;color:#c8cbd1;"><i>拖</i><i>入</i><i>字</i><i>段</i><i>至</i><i>此</i><i>处</i></div>
<div class="b" style="left:1891.9px;top:365.1px;width:48.6px;height:48.6px;background:#fff;border:2.2px solid #e4e6eb;border-radius:9px;"></div>
<div class="t" style="left:1903px;top:369px;font-size:33px;font-style:italic;color:#c8cbd1;letter-spacing:-0.5px;">fx</div>
<div class="t" style="left:1971.6px;top:369.8px;font-size:26.4px;color:#c8cbd1;">1-15<i>个</i><i>指</i><i>标</i></div>
<div class="t" style="left:2146.0px;top:369.8px;font-size:26.4px;color:#2277e0;"><i>启</i><i>用</i><i>次</i><i>坐</i><i>标</i><i>轴</i></div>
<svg class="b" style="left:677.5px;top:559.5px;" width="40" height="40" viewBox="0 0 40 40" fill="none"><circle cx="20" cy="20" r="17.4" stroke="#e0e0e0" stroke-width="2.4" fill="#fff"/><path d="M12 20h16" stroke="#d0d0d0" stroke-width="4" stroke-linecap="round"/></svg>
<div class="t" style="left:723.0px;top:557.8px;font-size:28.6px;color:#555;"><i>且</i></div>
<svg class="b" style="left:870px;top:476px" width="56" height="256" viewBox="0 0 56 256" fill="none"><path d="M50 7H12a5 5 0 0 0-5 5v232a5 5 0 0 0 5 5h38M7 66.5h43M7 128h43M7 189.5h43" stroke="#e2e2e2" stroke-width="2.6"/></svg>
<div class="b" style="left:931.0px;top:448.7px;width:421.8px;height:49.0px;background:#fff;border:2.2px solid #c4c8cf;border-radius:10px;"></div>
<div class="t" style="left:959.7px;top:453.2px;font-size:26.4px;color:#505257;"><i>负</i><i>责</i><i>人</i><i>主</i><i>属</i><i>部</i><i>门</i></div>
<svg class="b" style="left:1318.0px;top:462.4px;" width="30" height="30" viewBox="0 0 30 30" fill="none"><rect x="1.7" y="1.7" width="26.6" height="26.6" rx="3" stroke="#737a8c" stroke-width="2.3"/><circle cx="10" cy="10" r="3.3" stroke="#737a8c" stroke-width="2.1"/><path d="M13.5 10H24" stroke="#737a8c" stroke-width="2.1"/><circle cx="20" cy="20" r="3.3" stroke="#737a8c" stroke-width="2.1"/><path d="M6 20h10.5" stroke="#737a8c" stroke-width="2.1"/></svg>
<div class="b" style="left:1365.8px;top:448.7px;width:260.0px;height:49.6px;background:#fff;border:2.2px solid #c4c8cf;border-radius:17px;"></div>
<div class="t" style="left:1385.0px;top:453.2px;font-size:26.4px;color:#222;"><i>属</i><i>于</i></div>
<svg class="b" style="left:1585.0px;top:467.9px;" width="26" height="14.5" viewBox="0 0 26 14.5" fill="none"><path d="M2 2L13.0 11.5L24 2" stroke="#b4b8bf" stroke-width="2.6" stroke-linecap="round" stroke-linejoin="round"/></svg>
<div class="b" style="left:1638.8px;top:448.7px;width:435.5px;height:49.6px;background:#fff;border:2.2px solid #c4c8cf;border-radius:17px;"></div>
<svg class="b" style="left:2101.5px;top:457.4px;" width="30" height="32" viewBox="0 0 30 32" fill="none"><rect x="2" y="14" width="25.500" height="15.500" rx="3.500" stroke="#6b6b6b" stroke-width="2.300"/><path d="M8 14V8.500a6.300 6.300 0 0 1 12.200-2.200" stroke="#6b6b6b" stroke-width="2.300" stroke-linecap="round"/><circle cx="14.700" cy="21.700" r="3.200" stroke="#6b6b6b" stroke-width="2.200"/></svg>
<svg class="b" style="left:2151.0px;top:457.4px;" width="32" height="32" viewBox="0 0 32 32" fill="none"><path d="M1.500 6.500h29" stroke="#6b6b6b" stroke-width="2.300" stroke-linecap="round"/><path d="M10.500 6V4a2 2 0 0 1 2-2h7a2 2 0 0 1 2 2v2" stroke="#6b6b6b" stroke-width="2.300"/><path d="M4.300 7l2.300 20a3 3 0 0 0 3 2.600h12.800a3 3 0 0 0 3-2.600L27.700 7" stroke="#6b6b6b" stroke-width="2.300"/><path d="M12.700 12.500v8.500M19.300 12.500v8.500" stroke="#6b6b6b" stroke-width="2.300" stroke-linecap="round"/></svg>
<div class="b" style="left:2217.3px;top:453.7px;width:31.4px;height:31.0px;background:#fff;border:2.2px solid #c8cbd1;border-radius:8px;"></div>
<div class="t" style="left:2271.0px;top:451.2px;font-size:28.6px;color:#181c25;"><i>设</i><i>为</i><span style="margin-left:3.5px"><i>默</i></span></div>
<div class="b" style="left:931.0px;top:510.3px;width:421.8px;height:49.0px;background:#fff;border:2.2px solid #c4c8cf;border-radius:10px;"></div>
<div class="t" style="left:959.7px;top:514.8px;font-size:26.4px;color:#505257;"><i>生</i><i>命</i><i>状</i><i>态</i></div>
<div class="b" style="left:1365.8px;top:510.3px;width:260.0px;height:49.6px;background:#fff;border:2.2px solid #c4c8cf;border-radius:17px;"></div>
<div class="t" style="left:1385.0px;top:514.8px;font-size:26.4px;color:#222;"><i>不</i><i>属</i><i>于</i></div>
<svg class="b" style="left:1585.0px;top:529.5px;" width="26" height="14.5" viewBox="0 0 26 14.5" fill="none"><path d="M2 2L13.0 11.5L24 2" stroke="#b4b8bf" stroke-width="2.6" stroke-linecap="round" stroke-linejoin="round"/></svg>
<div class="b" style="left:1638.8px;top:512.3px;width:435.5px;height:47.5px;background:#fff;border:2.2px solid #c4c8cf;border-radius:12px;"></div>
<svg class="b" style="left:2101.5px;top:519.0px;" width="30" height="32" viewBox="0 0 30 32" fill="none"><rect x="2" y="14" width="25.500" height="15.500" rx="3.500" stroke="#6b6b6b" stroke-width="2.300"/><path d="M8 14V9a6.5 6.5 0 0 1 13 0v5" stroke="#6b6b6b" stroke-width="2.300" stroke-linecap="round"/><circle cx="14.700" cy="21.700" r="3.200" stroke="#6b6b6b" stroke-width="2.200"/></svg>
<svg class="b" style="left:2151.0px;top:519.0px;" width="32" height="32" viewBox="0 0 32 32" fill="none"><path d="M1.500 6.500h29" stroke="#6b6b6b" stroke-width="2.300" stroke-linecap="round"/><path d="M10.500 6V4a2 2 0 0 1 2-2h7a2 2 0 0 1 2 2v2" stroke="#6b6b6b" stroke-width="2.300"/><path d="M4.300 7l2.300 20a3 3 0 0 0 3 2.600h12.800a3 3 0 0 0 3-2.600L27.700 7" stroke="#6b6b6b" stroke-width="2.300"/><path d="M12.700 12.500v8.500M19.300 12.500v8.500" stroke="#6b6b6b" stroke-width="2.300" stroke-linecap="round"/></svg>
<div class="b" style="left:2217.3px;top:515.3px;width:31.4px;height:31.0px;background:#fff;border:2.2px solid #c8cbd1;border-radius:8px;"></div>
<div class="t" style="left:2271.0px;top:512.8px;font-size:28.6px;color:#181c25;"><i>设</i><i>为</i><span style="margin-left:3.5px"><i>默</i></span></div>
<div class="b" style="left:931.0px;top:571.9px;width:421.8px;height:49.0px;background:#fff;border:2.2px solid #c4c8cf;border-radius:10px;"></div>
<div class="t" style="left:959.7px;top:576.4px;font-size:26.4px;color:#505257;"><i>覆</i><i>盖</i><i>地</i><i>区</i><i>数</i><i>（</i><i>国</i><i>家</i><i>）</i></div>
<svg class="b" style="left:1319.0px;top:583.6px;" width="30" height="32" viewBox="0 0 30 32" fill="none"><path d="M24 9V2H2.5v28H10" stroke="#737a8c" stroke-width="2.6"/><path d="M8 11h10M8 17h3M8 23h2" stroke="#737a8c" stroke-width="2.2"/><path d="M20 13l8 4-8 4-8-4zM12.5 21.5l7.5 3.8 7.5-3.8M12.5 25.5l7.5 3.8 7.5-3.8" stroke="#737a8c" stroke-width="2.2" stroke-linejoin="round"/></svg>
<div class="b" style="left:1365.8px;top:571.9px;width:260.0px;height:49.6px;background:#fff;border:2.2px solid #c4c8cf;border-radius:17px;"></div>
<div class="t" style="left:1385.0px;top:576.4px;font-size:26.4px;color:#222;"><i>等</i><i>于</i></div>
<svg class="b" style="left:1585.0px;top:591.1px;" width="26" height="14.5" viewBox="0 0 26 14.5" fill="none"><path d="M2 2L13.0 11.5L24 2" stroke="#b4b8bf" stroke-width="2.6" stroke-linecap="round" stroke-linejoin="round"/></svg>
<div class="b" style="left:1638.8px;top:571.9px;width:435.5px;height:49.6px;background:#fff;border:2.2px solid #c4c8cf;border-radius:17px;"></div>
<svg class="b" style="left:2101.5px;top:580.6px;" width="30" height="32" viewBox="0 0 30 32" fill="none"><rect x="2" y="14" width="25.500" height="15.500" rx="3.500" stroke="#6b6b6b" stroke-width="2.300"/><path d="M8 14V8.500a6.300 6.300 0 0 1 12.200-2.200" stroke="#6b6b6b" stroke-width="2.300" stroke-linecap="round"/><circle cx="14.700" cy="21.700" r="3.200" stroke="#6b6b6b" stroke-width="2.200"/></svg>
<svg class="b" style="left:2151.0px;top:580.6px;" width="32" height="32" viewBox="0 0 32 32" fill="none"><path d="M1.500 6.500h29" stroke="#6b6b6b" stroke-width="2.300" stroke-linecap="round"/><path d="M10.500 6V4a2 2 0 0 1 2-2h7a2 2 0 0 1 2 2v2" stroke="#6b6b6b" stroke-width="2.300"/><path d="M4.300 7l2.300 20a3 3 0 0 0 3 2.600h12.800a3 3 0 0 0 3-2.600L27.700 7" stroke="#6b6b6b" stroke-width="2.300"/><path d="M12.700 12.500v8.500M19.300 12.500v8.500" stroke="#6b6b6b" stroke-width="2.300" stroke-linecap="round"/></svg>
<div class="b" style="left:2217.3px;top:576.9px;width:31.4px;height:31.0px;background:#fff;border:2.2px solid #c8cbd1;border-radius:8px;"></div>
<div class="t" style="left:2271.0px;top:574.4px;font-size:28.6px;color:#181c25;"><i>设</i><i>为</i><span style="margin-left:3.5px"><i>默</i></span></div>
<div class="b" style="left:931.0px;top:633.5px;width:421.8px;height:49.0px;background:#fff;border:2.2px solid #c4c8cf;border-radius:10px;"></div>
<div class="t" style="left:959.7px;top:638.0px;font-size:26.4px;color:#505257;"><i>覆</i><i>盖</i><i>地</i><i>区</i><i>数</i><i>（</i><i>省</i><i>级</i><i>）</i></div>
<svg class="b" style="left:1319.0px;top:645.2px;" width="30" height="32" viewBox="0 0 30 32" fill="none"><path d="M24 9V2H2.5v28H10" stroke="#737a8c" stroke-width="2.6"/><path d="M8 11h10M8 17h3M8 23h2" stroke="#737a8c" stroke-width="2.2"/><path d="M20 13l8 4-8 4-8-4zM12.5 21.5l7.5 3.8 7.5-3.8M12.5 25.5l7.5 3.8 7.5-3.8" stroke="#737a8c" stroke-width="2.2" stroke-linejoin="round"/></svg>
<div class="b" style="left:1365.8px;top:633.5px;width:260.0px;height:49.6px;background:#fff;border:2.2px solid #c4c8cf;border-radius:17px;"></div>
<div class="t" style="left:1385.0px;top:638.0px;font-size:26.4px;color:#222;"><i>等</i><i>于</i></div>
<svg class="b" style="left:1585.0px;top:652.7px;" width="26" height="14.5" viewBox="0 0 26 14.5" fill="none"><path d="M2 2L13.0 11.5L24 2" stroke="#b4b8bf" stroke-width="2.6" stroke-linecap="round" stroke-linejoin="round"/></svg>
<div class="b" style="left:1638.8px;top:633.5px;width:435.5px;height:49.6px;background:#fff;border:2.2px solid #c4c8cf;border-radius:17px;"></div>
<svg class="b" style="left:2101.5px;top:642.2px;" width="30" height="32" viewBox="0 0 30 32" fill="none"><rect x="2" y="14" width="25.500" height="15.500" rx="3.500" stroke="#6b6b6b" stroke-width="2.300"/><path d="M8 14V8.500a6.300 6.300 0 0 1 12.200-2.200" stroke="#6b6b6b" stroke-width="2.300" stroke-linecap="round"/><circle cx="14.700" cy="21.700" r="3.200" stroke="#6b6b6b" stroke-width="2.200"/></svg>
<svg class="b" style="left:2151.0px;top:642.2px;" width="32" height="32" viewBox="0 0 32 32" fill="none"><path d="M1.500 6.500h29" stroke="#6b6b6b" stroke-width="2.300" stroke-linecap="round"/><path d="M10.500 6V4a2 2 0 0 1 2-2h7a2 2 0 0 1 2 2v2" stroke="#6b6b6b" stroke-width="2.300"/><path d="M4.300 7l2.300 20a3 3 0 0 0 3 2.600h12.800a3 3 0 0 0 3-2.600L27.700 7" stroke="#6b6b6b" stroke-width="2.300"/><path d="M12.700 12.500v8.500M19.300 12.500v8.500" stroke="#6b6b6b" stroke-width="2.300" stroke-linecap="round"/></svg>
<div class="b" style="left:2217.3px;top:638.5px;width:31.4px;height:31.0px;background:#fff;border:2.2px solid #c8cbd1;border-radius:8px;"></div>
<div class="t" style="left:2271.0px;top:636.0px;font-size:28.6px;color:#181c25;"><i>设</i><i>为</i><span style="margin-left:3.5px"><i>默</i></span></div>
<div class="t" style="left:1663.0px;top:453.3px;font-size:26.4px;color:#f58a1f;">+ <i>选</i><i>择</i><i>人</i><i>员</i><i>和</i><i>部</i><i>门</i></div>
<div class="b" style="left:1648.8px;top:517.3px;width:145.5px;height:37.6px;background:#f0f3fa;border:2.2px solid #dde2ee;border-radius:8px;"></div>
<div class="t" style="left:1664.5px;top:519.8px;font-size:28.6px;color:#222;"><i>未</i><i>生</i><i>效</i></div>
<svg class="b" style="left:1762.0px;top:533.0px;" width="16" height="16" viewBox="0 0 16 16" fill="none"><path d="M2 2l12 12M14 2L2 14" stroke="#c1c5cd" stroke-width="2.2"/></svg>
<div class="b" style="left:1806.8px;top:517.3px;width:145.5px;height:37.6px;background:#f0f3fa;border:2.2px solid #dde2ee;border-radius:8px;"></div>
<div class="t" style="left:1822.5px;top:519.8px;font-size:28.6px;color:#222;"><i>审</i><i>核</i><i>中</i></div>
<svg class="b" style="left:1920.0px;top:533.0px;" width="16" height="16" viewBox="0 0 16 16" fill="none"><path d="M2 2l12 12M14 2L2 14" stroke="#c1c5cd" stroke-width="2.2"/></svg>
<div class="b" style="left:1964.8px;top:517.3px;width:42.0px;height:37.6px;background:#f0f3fa;border:2.2px solid #dde2ee;border-radius:8px;"></div>
<div class="t" style="left:1976.5px;top:517.8px;font-size:28.6px;color:#222;">...</div>
<svg class="b" style="left:2029.5px;top:520.7px;" width="36" height="36" viewBox="0 0 36 36" fill="none"><circle cx="18" cy="18" r="16" stroke="#c8c8c8" stroke-width="2.2" fill="#fff"/><path d="M18 9v18M9 18h18" stroke="#c8c8c8" stroke-width="2.2"/></svg>
<div class="t" style="left:1659.0px;top:578.3px;font-size:26.4px;color:#c1c5cd;"><i>请</i><i>输</i><i>入</i><i>数</i><i>字</i></div>
<div class="t" style="left:1659.0px;top:639.8px;font-size:26.4px;color:#c1c5cd;"><i>请</i><i>输</i><i>入</i><i>数</i><i>字</i></div>
<svg class="b" style="left:932.0px;top:701.7px;" width="40" height="40" viewBox="0 0 40 40" fill="none"><circle cx="20" cy="20" r="17.4" stroke="#e0e0e0" stroke-width="2.4" fill="#fff"/><path d="M10 20h20M20 10v20" stroke="#d4d4d4" stroke-width="4.4"/></svg>
<div class="t" style="left:2248.5px;top:702.5px;font-size:26.4px;color:#2277e0;"><i>添</i><i>加</i>OR<i>条</i><i>件</i></div>
<div class="b" style="left:475.0px;top:768.0px;width:246.4px;height:61.6px;background:#ff8000;border-radius:13px;"></div>
<div class="t" style="left:476.5px;top:779.8px;font-size:28.6px;color:#fff;width:246.4px;text-align:center;"><i>应</i><i>用</i></div>
<div class="b" style="left:1397.5px;top:858.0px;width:66.0px;height:12.0px;background:#fff;"></div>
<svg class="b" style="left:1416.0px;top:852.0px;" width="28" height="26" viewBox="0 0 28 26" fill="none"><path d="M3.800 14L14.100 3.200 24.400 14M3.800 24.600L14.100 13.800 24.400 24.600" stroke="#6f7580" stroke-width="2.500" stroke-linecap="round" stroke-linejoin="miter"/></svg>
<div class="t" style="left:466.5px;top:913.8px;font-size:26.4px;color:#181c25;"><i>场</i><i>景</i></div>
<div class="b" style="left:536.8px;top:899.9px;width:327.0px;height:66.9px;background:#fff;border:2.2px solid #c4c8cf;border-radius:17px;"></div>
<div class="t" style="left:556.5px;top:913.8px;font-size:26.4px;color:#181c25;"><i>全</i><i>部</i></div>
<svg class="b" style="left:821.0px;top:927.5px;" width="26.5" height="15" viewBox="0 0 26.5 15" fill="none"><path d="M2 2L13.25 12L24.5 2" stroke="#c1c5cd" stroke-width="2.6" stroke-linecap="round" stroke-linejoin="round"/></svg>
<div class="t" style="left:897.7px;top:913.8px;font-size:26.4px;color:#2277e0;"><i>指</i><i>标</i><i>详</i><i>情</i></div>
<svg class="b" style="left:1012.0px;top:924.0px;" width="28" height="22" viewBox="0 0 28 22" fill="none"><path d="M8.5 3.5H26M8.5 11H26M8.5 18.500H26" stroke="#2277e0" stroke-width="2.8"/><circle cx="2.6" cy="3.5" r="1.7" fill="#2277e0"/><circle cx="2.6" cy="11" r="1.7" fill="#2277e0"/><circle cx="2.6" cy="18.5" r="1.7" fill="#2277e0"/></svg>
<div class="b" style="left:466.0px;top:1016.8px;width:238.8px;height:49.1px;background:#fff;border:2.2px solid #e0e3e9;border-radius:13px;"></div>
<div class="t" style="left:486.5px;top:1021.3px;font-size:28.6px;color:#91959e;"><i>主</i><i>题</i>:</div>
<div class="t" style="left:572.0px;top:1021.3px;font-size:28.6px;color:#181c25;"><i>主</i><i>题</i>2</div>
<svg class="b" style="left:654.0px;top:1034.0px;" width="28.5" height="16" viewBox="0 0 28.5 16" fill="none"><path d="M2 2L14.25 13L26.5 2" stroke="#5a6175" stroke-width="3.2" stroke-linecap="round" stroke-linejoin="round"/></svg>
<div class="b" style="left:726.0px;top:1016.8px;width:251.3px;height:49.1px;background:#fff;border:2.2px solid #e0e3e9;border-radius:13px;"></div>
<div class="t" style="left:746.0px;top:1021.3px;font-size:28.6px;color:#91959e;"><i>配</i><i>色</i>:</div>
<div class="t" style="left:832.0px;top:1021.3px;font-size:28.6px;color:#181c25;"><i>经</i><i>典</i><i>灰</i></div>
<svg class="b" style="left:926.0px;top:1034.0px;" width="28.5" height="16" viewBox="0 0 28.5 16" fill="none"><path d="M2 2L14.25 13L26.5 2" stroke="#5a6175" stroke-width="3.2" stroke-linecap="round" stroke-linejoin="round"/></svg>
<div class="t" style="left:999.7px;top:1020.8px;font-size:28.6px;color:#c8cbd1;">13</div>
<svg class="b" style="left:1043.5px;top:1035.5px;" width="26.5" height="15" viewBox="0 0 26.5 15" fill="none"><path d="M2 2L13.25 12L24.5 2" stroke="#c8cbd1" stroke-width="2.6" stroke-linecap="round" stroke-linejoin="round"/></svg>
<svg class="b" style="left:1094.0px;top:1024.0px;" width="24" height="32" viewBox="0 0 24 32" fill="none"><path d="M2.500 2.500h9.500a6.300 6.300 0 0 1 0 12.600H2.500zM2.500 15.100h11a7.100 7.100 0 0 1 0 14.200H2.500z" stroke="#c8cbd1" stroke-width="2.300" stroke-linejoin="round"/></svg>
<svg class="b" style="left:1138.0px;top:1024.0px;" width="40" height="40" viewBox="0 0 40 40" fill="none"><path d="M8 28L18.500 3.500h1L30 28M11.500 20h15" stroke="#c8cbd1" stroke-width="2.600" stroke-linejoin="round"/><rect x="2" y="32.200" width="35" height="4.600" rx="2.300" fill="#999"/></svg>
<svg class="b" style="left:1184.0px;top:1039.5px;" width="26" height="15" viewBox="0 0 26 15" fill="none"><path d="M2 2L13.0 12L24 2" stroke="#c8cbd1" stroke-width="2.6" stroke-linecap="round" stroke-linejoin="round"/></svg>
<svg class="b" style="left:1226.0px;top:1022.0px;" width="40" height="42" viewBox="0 0 40 42" fill="none"><path d="M9 4l7 7" stroke="#c8cbd1" stroke-width="2.800" stroke-linecap="round"/><path d="M16 7.500l12 12-10 10-12-12z" stroke="#c8cbd1" stroke-width="2.600" stroke-linejoin="round"/><path d="M7 18.500h20l-9 9.500z" fill="#c8cbd1"/><path d="M30.500 24c1.500 2 2.300 3.200 2.300 4.300a2.300 2.300 0 0 1-4.600 0c0-1.100.8-2.300 2.300-4.300z" fill="#c8cbd1"/><rect x="2" y="34.200" width="35" height="4.600" rx="2.300" fill="#999"/></svg>
<svg class="b" style="left:1272.0px;top:1039.5px;" width="26" height="15" viewBox="0 0 26 15" fill="none"><path d="M2 2L13.0 12L24 2" stroke="#c8cbd1" stroke-width="2.6" stroke-linecap="round" stroke-linejoin="round"/></svg>
<div class="b" style="left:1316.0px;top:1021.0px;width:2.0px;height:43.5px;background:#e6e8ec;"></div>
<svg class="b" style="left:1335.0px;top:1025.0px;" width="34" height="32" viewBox="0 0 34 32" fill="none"><path d="M2 8h11M7.500 2.500v11" stroke="#c8cbd1" stroke-width="2.800"/><path d="M18 8h13.500v20h-24V17M7.500 18.500h24" stroke="#c8cbd1" stroke-width="2.800"/></svg>
<svg class="b" style="left:1390.0px;top:1025.0px;" width="34" height="34" viewBox="0 0 34 34" fill="none"><rect x="3.200" y="12.600" width="26.600" height="11" stroke="#c8cbd1" stroke-width="2.800"/><path d="M5.500 4.400L26.600 31" stroke="#c8cbd1" stroke-width="2.800" stroke-linecap="round"/></svg>
<svg class="b" style="left:1443.0px;top:1026.0px;" width="34" height="34" viewBox="0 0 34 34" fill="none"><path d="M2.500 12V3.500H13v8.500M2.500 19v10.500H13V19M19.500 12V3.500H30v8.500M19.500 19v10.500H30V19" stroke="#c8cbd1" stroke-width="2.800"/><path d="M1 15.500h9M32 15.500h-9" stroke="#c8cbd1" stroke-width="2.600"/><path d="M9 11.800l4.600 3.700-4.600 3.700zM24 11.800l-4.600 3.700 4.600 3.700z" fill="#c8cbd1"/></svg>
<svg class="b" style="left:1495.0px;top:1026.0px;" width="36" height="34" viewBox="0 0 36 34" fill="none"><path d="M5 12V3.500h8.500v26H5V19M30.500 12V3.500H22v26h8.500V19" stroke="#c8cbd1" stroke-width="2.800"/><path d="M3 15.500h10M33.500 15.500h-10" stroke="#c8cbd1" stroke-width="2.600"/><path d="M5 11.800L.4 15.500 5 19.200zM29.500 11.800l4.600 3.700-4.600 3.700z" fill="#c8cbd1"/></svg>
<div class="b" style="left:1546.0px;top:1021.0px;width:2.0px;height:43.5px;background:#e6e8ec;"></div>
<svg class="b" style="left:1569.5px;top:1027.5px;" width="30" height="31" viewBox="0 0 30 31" fill="none"><path d="M0 1.5h29M0 10.5h19M0 19.5h29M0 28.5h15" stroke="#c8cbd1" stroke-width="2.600"/></svg>
<svg class="b" style="left:1622.5px;top:1027.5px;" width="30" height="31" viewBox="0 0 30 31" fill="none"><path d="M0.0 1.5h29M5.0 10.5h19M0.0 19.5h29M7.0 28.5h15" stroke="#c8cbd1" stroke-width="2.600"/></svg>
<svg class="b" style="left:1676.0px;top:1027.5px;" width="30" height="31" viewBox="0 0 30 31" fill="none"><path d="M0 1.5h29M10 10.5h19M0 19.5h29M14 28.5h15" stroke="#c8cbd1" stroke-width="2.600"/></svg>
<div class="b" style="left:1725.0px;top:1021.0px;width:2.0px;height:43.5px;background:#e6e8ec;"></div>
<svg class="b" style="left:1746.5px;top:1024.0px;" width="32" height="32" viewBox="0 0 32 32" fill="none"><rect x="2.600" y="2.600" width="26" height="26" stroke="#737a8c" stroke-width="3.400"/><path d="M2.600 11.500h26M2.600 20h26" stroke="#737a8c" stroke-width="3.400"/></svg>
<svg class="b" style="left:1780.5px;top:1035.5px;" width="26" height="15" viewBox="0 0 26 15" fill="none"><path d="M2 2L13.0 12L24 2" stroke="#737a8c" stroke-width="3" stroke-linecap="round" stroke-linejoin="round"/></svg>
<div class="b" style="left:1824.0px;top:1021.0px;width:2.0px;height:43.5px;background:#e6e8ec;"></div>
<div class="t" style="left:1844.0px;top:1021.3px;font-size:28.6px;color:#181c25;">hover<i>颜</i><i>色</i></div>
<div class="b" style="left:1981.8px;top:1023.0px;width:34.6px;height:35.0px;background:#f7f7f8;border:2.2px solid #e4e6ea;border-radius:9px;"></div>
<svg class="b" style="left:1992.5px;top:1037.7px;" width="17.5" height="11" viewBox="0 0 17.5 11" fill="none"><path d="M2 2L8.75 8L15.5 2" stroke="#9a9ea8" stroke-width="2" stroke-linecap="round" stroke-linejoin="round"/></svg>
<div class="t" style="left:2047.7px;top:1021.3px;font-size:28.6px;color:#181c25;"><i>斑</i><i>马</i><i>线</i><i>颜</i><i>色</i></div>
<div class="b" style="left:2198.8px;top:1023.0px;width:34.6px;height:35.0px;background:#f7f7f8;border:2.2px solid #e4e6ea;border-radius:9px;"></div>
<svg class="b" style="left:2209.5px;top:1037.7px;" width="17.5" height="11" viewBox="0 0 17.5 11" fill="none"><path d="M2 2L8.75 8L15.5 2" stroke="#9a9ea8" stroke-width="2" stroke-linecap="round" stroke-linejoin="round"/></svg>
<div class="t" style="left:466.5px;top:1101.3px;font-size:28.6px;color:#181c25;"><i>小</i><i>计</i><i>底</i><i>色</i></div>
<div class="b" style="left:590.0px;top:1102.3px;width:34.6px;height:35.0px;background:#fff8ea;border:2.2px solid #ece8df;border-radius:9px;"></div>
<svg class="b" style="left:600.7px;top:1117.0px;" width="17.5" height="11" viewBox="0 0 17.5 11" fill="none"><path d="M2 2L8.75 8L15.5 2" stroke="#a59c8e" stroke-width="2" stroke-linecap="round" stroke-linejoin="round"/></svg>
<div class="t" style="left:656.0px;top:1101.3px;font-size:28.6px;color:#181c25;"><i>总</i><i>计</i><i>底</i><i>色</i></div>
<div class="b" style="left:778.8px;top:1102.3px;width:34.6px;height:35.0px;background:#fff1dc;border:2.2px solid #ece3d3;border-radius:9px;"></div>
<svg class="b" style="left:789.5px;top:1117.0px;" width="17.5" height="11" viewBox="0 0 17.5 11" fill="none"><path d="M2 2L8.75 8L15.5 2" stroke="#a59c8e" stroke-width="2" stroke-linecap="round" stroke-linejoin="round"/></svg>
<div class="b" style="left:466px;top:1171px;width:1869px;height:323px;overflow:hidden;">
<div class="b" style="left:0.0px;top:0.0px;width:2200.0px;height:73.0px;background:#f2f3f5;"></div><div class="b" style="left:0.0px;top:73.0px;width:2200.0px;height:74.0px;background:#fafafa;"></div><div class="b" style="left:0.0px;top:146.0px;width:2200.0px;height:74.0px;background:#fff;"></div><div class="b" style="left:0.0px;top:219.0px;width:2200.0px;height:74.0px;background:#fafafa;"></div><div class="b" style="left:0.0px;top:291.0px;width:2200.0px;height:74.0px;background:#fff;"></div><div class="b" style="left:0.0px;top:0.0px;width:37.0px;height:400.0px;background:#f2f3f5;"></div><div class="b" style="left:553.0px;top:74.0px;width:310.0px;height:71.0px;background:#3083ff;"></div><div class="b" style="left:0.0px;top:0.0px;width:2200.0px;height:2.0px;background:#e5e8ee;"></div><div class="b" style="left:0.0px;top:72.0px;width:2200.0px;height:2.0px;background:#e5e8ee;"></div><div class="b" style="left:0.0px;top:145.0px;width:2200.0px;height:2.0px;background:#e5e8ee;"></div><div class="b" style="left:0.0px;top:218.0px;width:2200.0px;height:2.0px;background:#e5e8ee;"></div><div class="b" style="left:0.0px;top:290.0px;width:2200.0px;height:2.0px;background:#e5e8ee;"></div><div class="b" style="left:0.0px;top:363.0px;width:2200.0px;height:2.0px;background:#e5e8ee;"></div><div class="b" style="left:0.0px;top:74.0px;width:37.0px;height:400.0px;background:#f0f2f5;"></div><div class="b" style="left:1.0px;top:0.0px;width:2.0px;height:400.0px;background:#e9ecf1;"></div><div class="b" style="left:36.0px;top:0.0px;width:2.0px;height:400.0px;background:#e9ecf1;"></div><div class="b" style="left:361.0px;top:0.0px;width:2.0px;height:400.0px;background:#e5e8ee;"></div><div class="b" style="left:551.0px;top:0.0px;width:2.0px;height:400.0px;background:#e5e8ee;"></div><div class="b" style="left:863.0px;top:0.0px;width:2.0px;height:400.0px;background:#e5e8ee;"></div><div class="b" style="left:1175.0px;top:0.0px;width:2.0px;height:400.0px;background:#e5e8ee;"></div><div class="b" style="left:1488.0px;top:0.0px;width:2.0px;height:400.0px;background:#e5e8ee;"></div><div class="b" style="left:1800.0px;top:0.0px;width:2.0px;height:400.0px;background:#e5e8ee;"></div><div class="b" style="left:2112.0px;top:0.0px;width:2.0px;height:400.0px;background:#e5e8ee;"></div>
</div>
<div class="b" style="left:466.7px;top:1492.6px;width:1868.0px;height:2.0px;background:#e9ebf0;"></div>
<div class="t" style="left:522.9px;top:1186.5px;font-size:28.6px;color:#5a5f6b;"><i>客</i><i>户</i><i>级</i><i>别</i></div>
<div class="t" style="left:826.6px;top:1186.5px;font-size:28.6px;color:#5a5f6b;width:190px;text-align:center;"><i>创</i><i>建</i><i>客</i><i>户</i><i>数</i></div>
<div class="t" style="left:1024.0px;top:1186.5px;font-size:28.6px;color:#5a5f6b;width:312.4px;text-align:center;"><i>覆</i><i>盖</i><i>地</i><i>区</i><i>数</i><i>（</i><i>国</i><i>家</i><i>）</i></div>
<div class="t" style="left:1336.5px;top:1186.5px;font-size:28.6px;color:#5a5f6b;width:312.4px;text-align:center;"><i>覆</i><i>盖</i><i>地</i><i>区</i><i>数</i><i>（</i><i>省</i><i>级</i><i>）</i></div>
<div class="t" style="left:1648.9px;top:1186.5px;font-size:28.6px;color:#5a5f6b;width:312.4px;text-align:center;"><i>覆</i><i>盖</i><i>地</i><i>区</i><i>数</i><i>（</i><i>市</i><i>级</i><i>）</i></div>
<div class="t" style="left:1961.3px;top:1186.5px;font-size:28.6px;color:#5a5f6b;width:312.4px;text-align:center;"><i>覆</i><i>盖</i><i>地</i><i>区</i><i>数</i><i>（</i><i>区</i><i>级</i><i>）</i></div>
<div class="t" style="left:2273.5px;top:1186.5px;font-size:28.6px;color:#5a5f6b;width:312.4px;text-align:center;"><i>覆</i><i>盖</i><i>地</i><i>区</i><i>数</i><i>（</i><i>乡</i><i>镇</i><i>）</i></div>
<div class="b" style="left:466.7px;top:1171.6px;width:1868px;height:322px;overflow:hidden;">
<div class="t" style="left:56.2px;top:87.0px;font-size:28.6px;color:#222;"><i>重</i><i>要</i><i>客</i><i>户</i></div><div class="t" style="right:1341.2px;top:86.0px;font-size:28.6px;color:#222;">104</div><div class="t" style="right:1028.7px;top:86.0px;font-size:28.6px;color:#0a2a66;">3</div><div class="t" style="right:716.3px;top:86.0px;font-size:28.6px;color:#222;">36</div><div class="t" style="right:403.9px;top:86.0px;font-size:28.6px;color:#222;">50</div><div class="t" style="right:91.7px;top:86.0px;font-size:28.6px;color:#222;">42</div><div class="t" style="left:56.2px;top:159.6px;font-size:28.6px;color:#222;"><i>普</i><i>通</i><i>客</i><i>户</i></div><div class="t" style="right:1341.2px;top:158.6px;font-size:28.6px;color:#222;">105</div><div class="t" style="right:1028.7px;top:158.6px;font-size:28.6px;color:#222;">1</div><div class="t" style="right:716.3px;top:158.6px;font-size:28.6px;color:#222;">25</div><div class="t" style="right:403.9px;top:158.6px;font-size:28.6px;color:#222;">36</div><div class="t" style="right:91.7px;top:158.6px;font-size:28.6px;color:#222;">31</div><div class="t" style="left:56.2px;top:232.2px;font-size:28.6px;color:#222;"><i>一</i><i>般</i><i>客</i><i>户</i></div><div class="t" style="right:1341.2px;top:231.2px;font-size:28.6px;color:#222;">91</div><div class="t" style="right:1028.7px;top:231.2px;font-size:28.6px;color:#222;">1</div><div class="t" style="right:716.3px;top:231.2px;font-size:28.6px;color:#222;">13</div><div class="t" style="right:403.9px;top:231.2px;font-size:28.6px;color:#222;">23</div><div class="t" style="right:91.7px;top:231.2px;font-size:28.6px;color:#222;">15</div><div class="t" style="left:56.2px;top:304.8px;font-size:28.6px;color:#222;"><i>其</i><i>他</i></div><div class="t" style="right:1341.2px;top:303.8px;font-size:28.6px;color:#222;">1</div><div class="t" style="right:1028.7px;top:303.8px;font-size:28.6px;color:#222;">0</div><div class="t" style="right:716.3px;top:303.8px;font-size:28.6px;color:#222;">0</div><div class="t" style="right:403.9px;top:303.8px;font-size:28.6px;color:#222;">0</div><div class="t" style="right:91.7px;top:303.8px;font-size:28.6px;color:#222;">0</div>
</div>
<div class="t" style="left:2030.5px;top:1521.2px;font-size:28.6px;color:#181c25;"><i>共</i>6<i>行</i></div>
<div class="b" style="left:2138.3px;top:1512.6px;width:261.4px;height:57.1px;background:#fff;border:2.2px solid #c4c8cf;border-radius:13px;"></div>
<div class="t" style="left:2157.7px;top:1521.2px;font-size:28.6px;color:#181c25;">200<i>行</i>/<i>页</i></div>
<svg class="b" style="left:2311.0px;top:1536.0px;" width="24" height="14" viewBox="0 0 24 14" fill="none"><path d="M2 2L12.0 11L22 2" stroke="#c1c5cd" stroke-width="2.4" stroke-linecap="round" stroke-linejoin="round"/></svg>
<div class="b" style="left:2334.4px;top:105.6px;width:546.0px;height:1520.0px;background:#fafafa;"></div>
<div class="b" style="left:2334.4px;top:186.6px;width:546.0px;height:2.2px;background:#dfe1e5;"></div>
<div class="t" style="left:2369.5px;top:126.3px;font-size:26.4px;color:#181c25;font-weight:bold;"><i>样</i><i>式</i></div>
<div class="t" style="left:2457.5px;top:126.3px;font-size:26.4px;color:#91959e;"><i>功</i><i>能</i><i>配</i><i>置</i></div>
<svg class="b" style="left:2807.0px;top:133.5px;" width="28" height="26" viewBox="0 0 28 26" fill="none"><path d="M1.500 2.700h25M10.500 8.900h16M10.500 15.100h16M1.500 21.300h25" stroke="#737a8c" stroke-width="2.500" stroke-linecap="round"/><path d="M1 8l5.400 4-5.400 4z" fill="#737a8c"/></svg>
<svg class="b" style="left:2377.0px;top:227.5px;" width="17" height="10.5" viewBox="0 0 17 10.5" fill="none"><path d="M1 0.5h15a.6.6 0 0 1 .5 1L9.3 9.9a1 1 0 0 1-1.6 0L.5 1.5a.6.6 0 0 1 .5-1z" fill="#737a8c"/></svg>
<div class="t" style="left:2416.0px;top:207.8px;font-size:26.4px;color:#181c25;font-weight:bold;"><i>基</i><i>本</i><i>信</i><i>息</i></div>
<div class="t" style="left:2370.0px;top:274.8px;font-size:26.4px;color:#181c25;"><i>图</i><i>表</i><i>名</i><i>称</i></div>
<div class="t" style="left:2504.0px;top:274.8px;font-size:26.4px;color:#181c25;"><i>地</i><i>区</i><i>定</i><i>位</i><i>支</i><i>持</i><i>统</i><i>计</i></div>
<div class="t" style="left:2370.0px;top:338.3px;font-size:26.4px;color:#181c25;"><i>备</i><i>注</i></div>
<div class="t" style="left:2414.0px;top:394.8px;font-size:26.4px;color:#181c25;"><i>备</i><i>注</i><i>内</i><i>容</i></div>
<svg class="b" style="left:2538.0px;top:400.0px;" width="34" height="32" viewBox="0 0 34 32" fill="none"><path d="M16 5H2.500v24.500h25.500V17" stroke="#737a8c" stroke-width="2.500"/><path d="M8 13.500h8M8 19h6M8 24h14" stroke="#737a8c" stroke-width="2.200"/><path d="M27 2l4.500 4.500L20 18l-5 1 1-5.500z" stroke="#737a8c" stroke-width="2.400" stroke-linejoin="round" fill="#fafafa"/></svg>
<div class="t" style="left:2414.0px;top:453.3px;font-size:26.4px;color:#181c25;"><i>备</i><i>注</i><i>样</i><i>式</i></div>
<svg class="b" style="left:2535.0px;top:460.7px;" width="30" height="30" viewBox="0 0 30 30" fill="none"><circle cx="15" cy="15" r="12" stroke="#c8cbd1" stroke-width="2.200" fill="#fff"/></svg>
<div class="t" style="left:2581.5px;top:453.3px;font-size:26.4px;color:#181c25;"><i>收</i><i>起</i></div>
<svg class="b" style="left:2689.2px;top:460.7px;" width="30" height="30" viewBox="0 0 30 30" fill="none"><circle cx="15" cy="15" r="12" stroke="#c8cbd1" stroke-width="2.200" fill="#fff"/></svg>
<div class="t" style="left:2735.0px;top:453.3px;font-size:26.4px;color:#181c25;"><i>外</i><i>露</i></div>
<svg class="b" style="left:2535.0px;top:520.5px;" width="30" height="30" viewBox="0 0 30 30" fill="none"><circle cx="15" cy="15" r="10.200" stroke="#ff8000" stroke-width="6.200" fill="#fff"/></svg>
<div class="t" style="left:2581.5px;top:513.8px;font-size:26.4px;color:#181c25;"><i>不</i><i>显</i><i>示</i></div>
<div class="t" style="left:2370.0px;top:571.3px;font-size:26.4px;color:#181c25;"><i>统</i><i>计</i><i>指</i><i>标</i><i>名</i><i>称</i></div>
<svg class="b" style="left:2547.0px;top:578.0px;" width="34" height="32" viewBox="0 0 34 32" fill="none"><path d="M16 5H2.500v24.500h25.500V17" stroke="#737a8c" stroke-width="2.500"/><path d="M8 13.500h8M8 19h6M8 24h14" stroke="#737a8c" stroke-width="2.200"/><path d="M27 2l4.500 4.500L20 18l-5 1 1-5.500z" stroke="#737a8c" stroke-width="2.400" stroke-linejoin="round" fill="#fafafa"/></svg>
<div class="t" style="left:2370.0px;top:628.8px;font-size:26.4px;color:#181c25;"><i>维</i><i>度</i><i>名</i><i>称</i></div>
<svg class="b" style="left:2494.5px;top:636.0px;" width="34" height="32" viewBox="0 0 34 32" fill="none"><path d="M16 5H2.500v24.500h25.500V17" stroke="#737a8c" stroke-width="2.500"/><path d="M8 13.500h8M8 19h6M8 24h14" stroke="#737a8c" stroke-width="2.200"/><path d="M27 2l4.500 4.500L20 18l-5 1 1-5.500z" stroke="#737a8c" stroke-width="2.400" stroke-linejoin="round" fill="#fafafa"/></svg>
<div class="b" style="left:2334.4px;top:692.8px;width:546.0px;height:2.2px;background:#dfe1e5;"></div>
<svg class="b" style="left:2377.0px;top:732.5px;" width="17" height="10.5" viewBox="0 0 17 10.5" fill="none"><path d="M1 0.5h15a.6.6 0 0 1 .5 1L9.3 9.9a1 1 0 0 1-1.6 0L.5 1.5a.6.6 0 0 1 .5-1z" fill="#737a8c"/></svg>
<div class="t" style="left:2416.5px;top:713.8px;font-size:26.4px;color:#181c25;font-weight:bold;"><i>显</i><i>示</i><i>设</i><i>置</i></div>
<div class="t" style="left:2370.0px;top:772.5px;font-size:26.4px;color:#5f646e;"><i>维</i><i>度</i><i>值</i><i>自</i><i>动</i><i>折</i><i>行</i></div>
<svg class="b" style="left:2412.0px;top:838.7px;" width="30" height="30" viewBox="0 0 30 30" fill="none"><circle cx="15" cy="15" r="10.200" stroke="#ff8000" stroke-width="6.200" fill="#fff"/></svg>
<div class="t" style="left:2457.7px;top:831.3px;font-size:26.4px;color:#181c25;"><i>不</i><i>折</i><i>行</i></div>
<svg class="b" style="left:2627.5px;top:838.7px;" width="30" height="30" viewBox="0 0 30 30" fill="none"><circle cx="15" cy="15" r="12" stroke="#c8cbd1" stroke-width="2.200" fill="#fff"/></svg>
<div class="t" style="left:2673.2px;top:831.3px;font-size:26.4px;color:#181c25;"><i>折</i><i>行</i></div>
<div class="t" style="left:2370.0px;top:888.8px;font-size:26.4px;color:#5f646e;"><i>列</i><i>宽</i></div>
<svg class="b" style="left:2412.0px;top:955.5px;" width="30" height="30" viewBox="0 0 30 30" fill="none"><circle cx="15" cy="15" r="10.200" stroke="#ff8000" stroke-width="6.200" fill="#fff"/></svg>
<div class="t" style="left:2457.7px;top:947.8px;font-size:26.4px;color:#181c25;"><i>充</i><i>满</i><i>页</i><i>面</i></div>
<svg class="b" style="left:2627.5px;top:955.5px;" width="30" height="30" viewBox="0 0 30 30" fill="none"><circle cx="15" cy="15" r="12" stroke="#c8cbd1" stroke-width="2.200" fill="#fff"/></svg>
<div class="t" style="left:2673.2px;top:947.8px;font-size:26.4px;color:#181c25;"><i>不</i><i>充</i><i>满</i><i>页</i><i>面</i></div>
<div class="t" style="left:2370.0px;top:1006.3px;font-size:26.4px;color:#5f646e;"><i>行</i><i>高</i></div>
<svg class="b" style="left:2412.0px;top:1071.7px;" width="30" height="30" viewBox="0 0 30 30" fill="none"><circle cx="15" cy="15" r="10.200" stroke="#ff8000" stroke-width="6.200" fill="#fff"/></svg>
<div class="t" style="left:2457.7px;top:1063.8px;font-size:26.4px;color:#181c25;"><i>舒</i><i>适</i></div>
<svg class="b" style="left:2627.5px;top:1071.7px;" width="30" height="30" viewBox="0 0 30 30" fill="none"><circle cx="15" cy="15" r="12" stroke="#c8cbd1" stroke-width="2.200" fill="#fff"/></svg>
<div class="t" style="left:2674.0px;top:1063.8px;font-size:26.4px;color:#181c25;"><i>紧</i><i>凑</i></div>
<div class="t" style="left:2370.0px;top:1123.3px;font-size:26.4px;color:#181c25;"><i>显</i><i>示</i><i>总</i><i>计</i></div>
<div class="t" style="left:2414.0px;top:1179.8px;font-size:26.4px;color:#181c25;"><i>显</i><i>示</i><i>方</i><i>式</i></div>
<svg class="b" style="left:2456.2px;top:1245.7px;" width="30" height="30" viewBox="0 0 30 30" fill="none"><circle cx="15" cy="15" r="10.200" stroke="#ff8000" stroke-width="6.200" fill="#fff"/></svg>
<div class="t" style="left:2502.7px;top:1237.8px;font-size:26.4px;color:#181c25;"><i>显</i><i>示</i></div>
<svg class="b" style="left:2649.5px;top:1245.7px;" width="30" height="30" viewBox="0 0 30 30" fill="none"><circle cx="15" cy="15" r="12" stroke="#c8cbd1" stroke-width="2.200" fill="#fff"/></svg>
<div class="t" style="left:2695.7px;top:1237.8px;font-size:26.4px;color:#181c25;"><i>不</i><i>显</i><i>示</i></div>
<div class="t" style="left:2414.0px;top:1296.3px;font-size:26.4px;color:#181c25;"><i>外</i><i>露</i><i>设</i><i>置</i></div>
<svg class="b" style="left:2537.0px;top:1304.5px;" width="29.9" height="27.3" viewBox="0 0 34 31" fill="none"><path d="M9.900 2.400h14.800l7.400 12.800-7.400 12.800H9.900L2.500 15.200z" stroke="#737a8c" stroke-width="3" stroke-linejoin="round"/><circle cx="17.300" cy="15.200" r="4.800" stroke="#737a8c" stroke-width="3"/></svg>
<div class="b" style="left:2414.2px;top:1360.5px;width:26.0px;height:26.5px;background:#ff8000;border-radius:7px;"></div>
<svg class="b" style="left:2414.2px;top:1360.5px;" width="26" height="26.5" viewBox="0 0 26 26.5" fill="none"><path d="M6.500 13l5 5 8-9" stroke="#fff" stroke-width="2.300" stroke-linecap="round" stroke-linejoin="round"/></svg>
<div class="t" style="left:2449.0px;top:1354.8px;font-size:26.4px;color:#181c25;"><i>卡</i><i>片</i><i>态</i><i>显</i><i>示</i><i>总</i><i>计</i></div>
<div class="b" style="left:2369.3px;top:1426.3px;width:23.0px;height:23.5px;background:#fff;border:2.2px solid #c8cbd1;border-radius:7px;"></div>
<div class="t" style="left:2413.7px;top:1418.4px;font-size:26.4px;color:#181c25;"><i>不</i><i>显</i><i>示</i><i>图</i><i>表</i><i>类</i><i>型</i></div>
</div></body></html>
